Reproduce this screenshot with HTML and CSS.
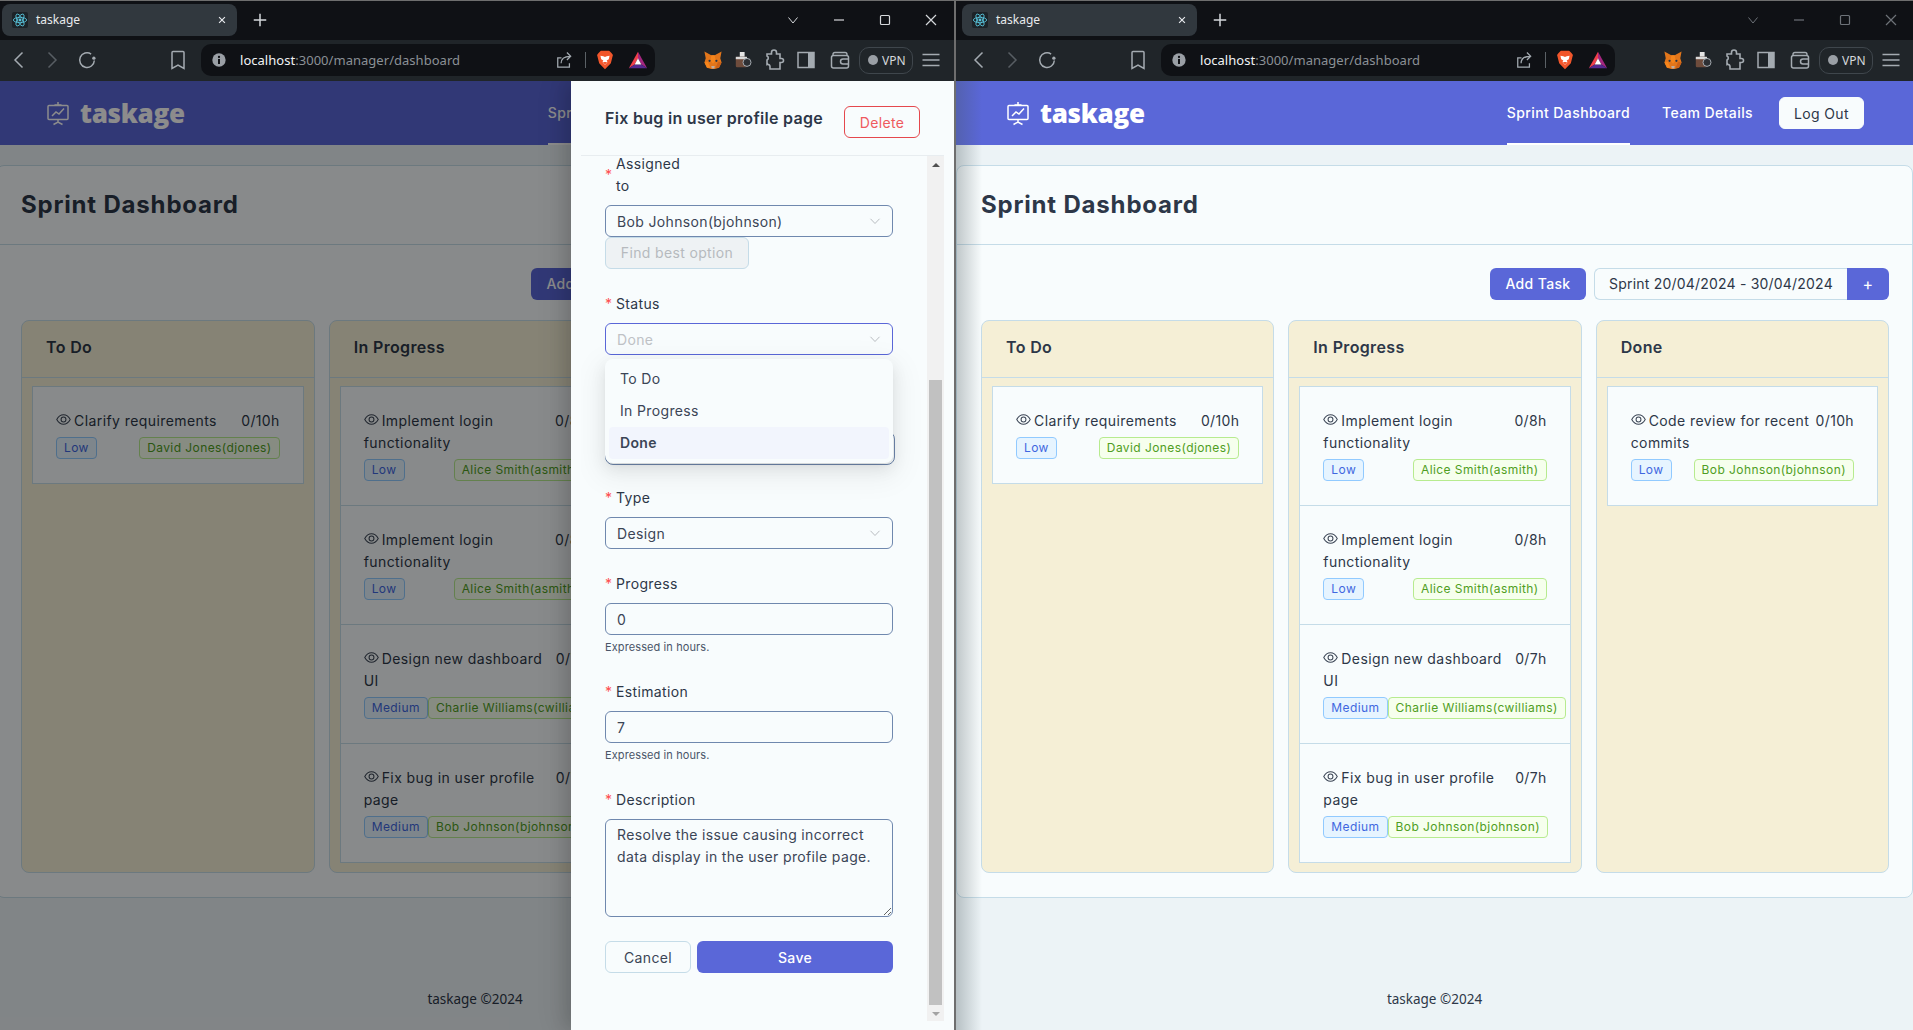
FILE: index.html
```html
<!DOCTYPE html>
<html lang="en">
<head>
<meta charset="UTF-8">
<meta name="viewport" content="width=device-width, initial-scale=1.0">
<title>taskage</title>
<link rel="stylesheet" href="styles.css">
</head>
<body>

<!-- icons used by both windows -->
<svg class="sprite" xmlns="http://www.w3.org/2000/svg">
  <symbol id="i-react" viewBox="0 0 24 24">
    <rect width="24" height="24" rx="3" fill="#1d2328"/>
    <g fill="none" stroke="#58c4dc" stroke-width="1.3">
      <ellipse cx="12" cy="12" rx="10" ry="4"/>
      <ellipse cx="12" cy="12" rx="10" ry="4" transform="rotate(60 12 12)"/>
      <ellipse cx="12" cy="12" rx="10" ry="4" transform="rotate(120 12 12)"/>
    </g>
    <circle cx="12" cy="12" r="2.2" fill="#58c4dc"/>
  </symbol>
  <symbol id="i-back" viewBox="0 0 24 24"><path d="M15.5 4.5 8 12l7.5 7.5" fill="none" stroke="currentColor" stroke-width="1.5"/></symbol>
  <symbol id="i-forward" viewBox="0 0 24 24"><path d="M8.500 4.500 16 12l-7.500 7.500" fill="none" stroke="currentColor" stroke-width="1.5"/></symbol>
  <symbol id="i-reload" viewBox="0 0 24 24">
    <path d="M16.5 5.500A8 8 0 1 0 20 12.500" fill="none" stroke="currentColor" stroke-width="1.6"/>
    <circle cx="19.5" cy="10" r="1.8" fill="currentColor"/>
  </symbol>
  <symbol id="i-bookmark" viewBox="0 0 24 24"><path d="M7 3.500h10a1 1 0 0 1 1 1V20.500l-6-3.500-6 3.500V4.500a1 1 0 0 1 1-1z" fill="none" stroke="currentColor" stroke-width="1.5"/></symbol>
  <symbol id="i-info" viewBox="0 0 24 24">
    <circle cx="12" cy="12" r="10" fill="#9a9fa5"/>
    <circle cx="12" cy="7.5" r="1.7" fill="#0f1115"/>
    <rect x="10.5" y="10.5" width="3" height="7.5" fill="#0f1115"/>
  </symbol>
  <symbol id="i-share" viewBox="0 0 24 24">
    <path d="M9 9.500H4.500v11h14V16" fill="none" stroke="currentColor" stroke-width="1.5"/>
    <path d="M8.500 16c0-5.500 4-8.500 11-8.500M15.500 3l4.500 4.500-4.500 4.500" fill="none" stroke="currentColor" stroke-width="1.5"/>
  </symbol>
  <symbol id="i-brave" viewBox="0 0 24 24">
    <path d="M7 1h10l3 3 1.500 2-1 4-1.500 6-7 7-7-7-1.500-6-1-4L4 4z" fill="#f1562b"/>
    <path d="M6.500 7l3.500.5 2 1 2-1 3.500-.5-1 4-2.500 1.500 1 2-3 3.500-3-3.500 1-2L7.500 11z" fill="#fff"/>
    <path d="M9.500 14.500h5L12 18z" fill="#f1562b"/>
  </symbol>
  <symbol id="i-bat" viewBox="0 0 24 24">
    <path d="M12 2 1 22l7-4.500 4-7.500z" fill="#f0404a"/>
    <path d="M12 2l11 20-7-4.500-4-7.500z" fill="#a3267f"/>
    <path d="M1 22h22l-7-4.500H8z" fill="#57298f"/>
    <path d="M12 10l4 7.500H8z" fill="#fff"/>
  </symbol>
  <symbol id="i-fox" viewBox="-2 -2 28 28">
    <path d="M2 2l8 4.500h4L22 2l-1.500 8 1.500 5-3 6-5 1.500h-4L5 21l-3-6 1.500-5z" fill="#e2761b"/>
    <path d="M10 6.500h4l1 6.500-3 3-3-3zM2 15l4-1 3 7-4 0z" fill="#f6851b"/>
    <path d="M22 15l-4-1-3 7 4 0z" fill="#cd6116"/>
    <path d="M10 19h4l-.5 3h-3z" fill="#c0ad9e"/>
    <circle cx="8" cy="13" r="1.3" fill="#233447"/>
    <circle cx="16" cy="13" r="1.3" fill="#233447"/>
  </symbol>
  <symbol id="i-camera" viewBox="-3 -3 30 30">
    <rect x="8" y="2" width="6" height="6" fill="#e4e4e4"/>
    <rect x="3" y="8" width="14" height="13" rx="1.5" fill="#6e4c3c"/>
    <rect x="3" y="8" width="14" height="3" fill="#d9d9d9"/>
    <circle cx="17" cy="15" r="5" fill="#2c2f33" stroke="#a9b0b6" stroke-width="1.2"/>
  </symbol>
  <symbol id="i-puzzle" viewBox="0 0 24 24"><path d="M5 6h4.500V4.500a2.500 2.500 0 0 1 5 0V6H18v4.500h1.500a2 2 0 0 1 0 4H18V21H8v-2.500a2.200 2.200 0 0 0-3-2V12a2.200 2.200 0 0 0 0-4z" fill="none" stroke="currentColor" stroke-width="1.6"/></symbol>
  <symbol id="i-sidebar" viewBox="0 0 24 24">
    <rect x="4" y="4.5" width="16" height="15" fill="none" stroke="currentColor" stroke-width="1.5"/>
    <rect x="14" y="4.5" width="6" height="15" fill="currentColor"/>
  </symbol>
  <symbol id="i-wallet" viewBox="0 0 24 24">
    <path d="M5 8V6.500A2 2 0 0 1 7 4.500h10a2 2 0 0 1 2 2V8" fill="none" stroke="currentColor" stroke-width="1.4"/>
    <rect x="3.5" y="7.5" width="17" height="12.5" rx="2" fill="none" stroke="currentColor" stroke-width="1.5"/>
    <path d="M20.500 11H15a2.500 2.500 0 0 0 0 5h5.500" fill="none" stroke="currentColor" stroke-width="1.5"/>
  </symbol>
  <symbol id="i-menu" viewBox="0 0 24 24"><path d="M3.500 6.500h17M3.500 12h17M3.500 17.500h17" fill="none" stroke="currentColor" stroke-width="1.5"/></symbol>
  <symbol id="i-close" viewBox="0 0 24 24"><path d="M7 7l10 10M17 7 7 17" fill="none" stroke="currentColor" stroke-width="2"/></symbol>
  <symbol id="i-plus" viewBox="0 0 24 24"><path d="M12 4.500v15M4.500 12h15" fill="none" stroke="currentColor" stroke-width="1.8"/></symbol>
  <symbol id="i-win-down" viewBox="0 0 24 24"><path d="M7.500 9.500 12 15l4.500-5.500" fill="none" stroke="currentColor" stroke-width="1"/></symbol>
  <symbol id="i-win-min" viewBox="0 0 24 24"><path d="M7 12h10" fill="none" stroke="currentColor" stroke-width="1.2"/></symbol>
  <symbol id="i-win-max" viewBox="0 0 24 24"><rect x="7.5" y="7.5" width="9" height="9" rx="1" fill="none" stroke="currentColor" stroke-width="1.2"/></symbol>
  <symbol id="i-win-close" viewBox="0 0 24 24"><path d="M7 7l10 10M17 7 7 17" fill="none" stroke="currentColor" stroke-width="1.2"/></symbol>
  <symbol id="i-logo" viewBox="0 0 24 24">
    <g fill="none" stroke="currentColor" stroke-width="1.5">
      <path d="M12 1v3M8.500 4h7"/>
      <rect x="2" y="4.5" width="20" height="14" rx="1"/>
      <path d="M6 15l4-4 3 2 5-5.500"/>
      <path d="M12 18.500V21M7.500 23.500l4.500-2.500 4.500 2.500"/>
    </g>
  </symbol>
  <symbol id="i-eye" viewBox="0 0 16 16">
    <path d="M.8 8C2.800 4.400 5.300 3 8 3s5.200 1.400 7.200 5c-2 3.600-4.500 5-7.200 5S2.800 11.600.8 8z" fill="none" stroke="currentColor" stroke-width="1.1"/>
    <circle cx="8" cy="8" r="2.6" fill="none" stroke="currentColor" stroke-width="1.1"/>
  </symbol>
  <symbol id="i-chevron" viewBox="0 0 12 12"><path d="M1.500 3.800 6 8.500l4.500-4.700" fill="none" stroke="currentColor" stroke-width="1"/></symbol>
</svg>

<div class="desktop">

  <!-- left window, task drawer open -->
  <div class="window window-left">
    <div class="tabstrip">
      <div class="tab">
        <svg class="tab-icon"><use href="#i-react"/></svg>
        <span class="tab-title">taskage</span>
        <svg class="tab-close"><use href="#i-close"/></svg>
      </div>
      <svg class="tab-new"><use href="#i-plus"/></svg>
      <div class="win-controls">
        <svg class="win-btn"><use href="#i-win-down"/></svg>
        <svg class="win-btn"><use href="#i-win-min"/></svg>
        <svg class="win-btn"><use href="#i-win-max"/></svg>
        <svg class="win-btn"><use href="#i-win-close"/></svg>
      </div>
    </div>
    <div class="toolbar">
      <svg class="tool tool-back"><use href="#i-back"/></svg>
      <svg class="tool tool-forward"><use href="#i-forward"/></svg>
      <svg class="tool tool-reload"><use href="#i-reload"/></svg>
      <svg class="tool tool-bookmark"><use href="#i-bookmark"/></svg>
      <div class="address">
        <svg class="addr-info"><use href="#i-info"/></svg>
        <span class="url"><b>localhost</b>:3000/manager/dashboard</span>
        <svg class="addr-icon addr-share"><use href="#i-share"/></svg>
        <span class="addr-sep"></span>
        <svg class="addr-icon addr-brave"><use href="#i-brave"/></svg>
        <svg class="addr-icon addr-bat"><use href="#i-bat"/></svg>
      </div>
      <svg class="tool tool-fox"><use href="#i-fox"/></svg>
      <svg class="tool tool-camera"><use href="#i-camera"/></svg>
      <svg class="tool tool-puzzle"><use href="#i-puzzle"/></svg>
      <svg class="tool tool-sidebar"><use href="#i-sidebar"/></svg>
      <svg class="tool tool-wallet"><use href="#i-wallet"/></svg>
      <div class="vpn"><span class="vpn-dot"></span>VPN</div>
      <svg class="tool tool-menu"><use href="#i-menu"/></svg>
    </div>

    <div class="page">
      <header class="app-header">
        <div class="logo"><svg class="logo-icon"><use href="#i-logo"/></svg><span>taskage</span></div>
        <nav class="app-nav">
          <a class="nav-link active">Sprint Dashboard</a>
          <a class="nav-link">Team Details</a>
          <button class="btn-logout">Log Out</button>
        </nav>
      </header>
      <main class="content">
        <div class="card">
          <div class="card-head"><h1>Sprint Dashboard</h1></div>
          <div class="actions">
            <button class="btn-primary">Add Task</button>
            <div class="sprint-range">Sprint 20/04/2024 - 30/04/2024</div>
            <button class="btn-add-sprint">+</button>
          </div>
          <div class="board">
            <section class="column">
              <h3 class="column-head">To Do</h3>
              <ul class="task-list">
                <li class="task">
                  <div class="task-top"><span class="task-title"><svg class="eye"><use href="#i-eye"/></svg>Clarify requirements</span><span class="task-hours">0/10h</span></div>
                  <div class="task-tags"><span class="tag tag-blue">Low</span><span class="tag tag-green">David Jones(djones)</span></div>
                </li>
              </ul>
            </section>
            <section class="column">
              <h3 class="column-head">In Progress</h3>
              <ul class="task-list">
                <li class="task">
                  <div class="task-top"><span class="task-title"><svg class="eye"><use href="#i-eye"/></svg>Implement login<br>functionality</span><span class="task-hours">0/8h</span></div>
                  <div class="task-tags"><span class="tag tag-blue">Low</span><span class="tag tag-green">Alice Smith(asmith)</span></div>
                </li>
                <li class="task">
                  <div class="task-top"><span class="task-title"><svg class="eye"><use href="#i-eye"/></svg>Implement login<br>functionality</span><span class="task-hours">0/8h</span></div>
                  <div class="task-tags"><span class="tag tag-blue">Low</span><span class="tag tag-green">Alice Smith(asmith)</span></div>
                </li>
                <li class="task">
                  <div class="task-top"><span class="task-title"><svg class="eye"><use href="#i-eye"/></svg>Design new dashboard<br>UI</span><span class="task-hours">0/7h</span></div>
                  <div class="task-tags"><span class="tag tag-blue">Medium</span><span class="tag tag-green">Charlie Williams(cwilliams)</span></div>
                </li>
                <li class="task">
                  <div class="task-top"><span class="task-title"><svg class="eye"><use href="#i-eye"/></svg>Fix bug in user profile<br>page</span><span class="task-hours">0/7h</span></div>
                  <div class="task-tags"><span class="tag tag-blue">Medium</span><span class="tag tag-green">Bob Johnson(bjohnson)</span></div>
                </li>
              </ul>
            </section>
            <section class="column">
              <h3 class="column-head">Done</h3>
              <ul class="task-list">
                <li class="task">
                  <div class="task-top"><span class="task-title"><svg class="eye"><use href="#i-eye"/></svg>Code review for recent<br>commits</span><span class="task-hours">0/10h</span></div>
                  <div class="task-tags"><span class="tag tag-blue">Low</span><span class="tag tag-green">Bob Johnson(bjohnson)</span></div>
                </li>
              </ul>
            </section>
          </div>
        </div>
      </main>
      <footer class="app-footer">taskage ©2024</footer>

      <div class="mask"></div>
      <aside class="drawer">
        <div class="drawer-head">
          <h2>Fix bug in user profile page</h2>
          <button class="btn-delete">Delete</button>
        </div>
        <div class="drawer-body">
          <form class="task-form">
            <div class="field field-assigned">
              <label class="field-label"><i>*</i><span class="label-narrow">Assigned to</span></label>
              <div class="select">Bob Johnson(bjohnson)<svg class="select-arrow"><use href="#i-chevron"/></svg></div>
              <button type="button" class="btn-find" disabled>Find best option</button>
            </div>
            <div class="field field-status">
              <label class="field-label"><i>*</i>Status</label>
              <div class="select select-open"><span class="select-muted">Done</span><svg class="select-arrow"><use href="#i-chevron"/></svg></div>
              <ul class="dropdown">
                <li>To Do</li>
                <li>In Progress</li>
                <li class="selected">Done</li>
              </ul>
            </div>
            <div class="field field-type">
              <label class="field-label"><i>*</i>Type</label>
              <div class="select">Design<svg class="select-arrow"><use href="#i-chevron"/></svg></div>
            </div>
            <div class="field field-progress">
              <label class="field-label"><i>*</i>Progress</label>
              <input class="input" type="text" value="0">
              <div class="help">Expressed in hours.</div>
            </div>
            <div class="field field-estimation">
              <label class="field-label"><i>*</i>Estimation</label>
              <input class="input" type="text" value="7">
              <div class="help">Expressed in hours.</div>
            </div>
            <div class="field field-description">
              <label class="field-label"><i>*</i>Description</label>
              <textarea class="textarea">Resolve the issue causing incorrect data display in the user profile page.</textarea>
            </div>
            <div class="form-buttons">
              <button type="button" class="btn-cancel">Cancel</button>
              <button type="button" class="btn-save">Save</button>
            </div>
          </form>
          <div class="scrollbar">
            <span class="scroll-up"></span>
            <span class="scroll-thumb"></span>
            <span class="scroll-down"></span>
          </div>
        </div>
      </aside>
    </div>
  </div>

  <!-- right window, plain dashboard -->
  <div class="window window-right">
    <div class="tabstrip">
      <div class="tab">
        <svg class="tab-icon"><use href="#i-react"/></svg>
        <span class="tab-title">taskage</span>
        <svg class="tab-close"><use href="#i-close"/></svg>
      </div>
      <svg class="tab-new"><use href="#i-plus"/></svg>
      <div class="win-controls">
        <svg class="win-btn"><use href="#i-win-down"/></svg>
        <svg class="win-btn"><use href="#i-win-min"/></svg>
        <svg class="win-btn"><use href="#i-win-max"/></svg>
        <svg class="win-btn"><use href="#i-win-close"/></svg>
      </div>
    </div>
    <div class="toolbar">
      <svg class="tool tool-back"><use href="#i-back"/></svg>
      <svg class="tool tool-forward"><use href="#i-forward"/></svg>
      <svg class="tool tool-reload"><use href="#i-reload"/></svg>
      <svg class="tool tool-bookmark"><use href="#i-bookmark"/></svg>
      <div class="address">
        <svg class="addr-info"><use href="#i-info"/></svg>
        <span class="url"><b>localhost</b>:3000/manager/dashboard</span>
        <svg class="addr-icon addr-share"><use href="#i-share"/></svg>
        <span class="addr-sep"></span>
        <svg class="addr-icon addr-brave"><use href="#i-brave"/></svg>
        <svg class="addr-icon addr-bat"><use href="#i-bat"/></svg>
      </div>
      <svg class="tool tool-fox"><use href="#i-fox"/></svg>
      <svg class="tool tool-camera"><use href="#i-camera"/></svg>
      <svg class="tool tool-puzzle"><use href="#i-puzzle"/></svg>
      <svg class="tool tool-sidebar"><use href="#i-sidebar"/></svg>
      <svg class="tool tool-wallet"><use href="#i-wallet"/></svg>
      <div class="vpn"><span class="vpn-dot"></span>VPN</div>
      <svg class="tool tool-menu"><use href="#i-menu"/></svg>
    </div>

    <div class="page">
      <header class="app-header">
        <div class="logo"><svg class="logo-icon"><use href="#i-logo"/></svg><span>taskage</span></div>
        <nav class="app-nav">
          <a class="nav-link active">Sprint Dashboard</a>
          <a class="nav-link">Team Details</a>
          <button class="btn-logout">Log Out</button>
        </nav>
      </header>
      <main class="content">
        <div class="card">
          <div class="card-head"><h1>Sprint Dashboard</h1></div>
          <div class="actions">
            <button class="btn-primary">Add Task</button>
            <div class="sprint-range">Sprint 20/04/2024 - 30/04/2024</div>
            <button class="btn-add-sprint">+</button>
          </div>
          <div class="board">
            <section class="column">
              <h3 class="column-head">To Do</h3>
              <ul class="task-list">
                <li class="task">
                  <div class="task-top"><span class="task-title"><svg class="eye"><use href="#i-eye"/></svg>Clarify requirements</span><span class="task-hours">0/10h</span></div>
                  <div class="task-tags"><span class="tag tag-blue">Low</span><span class="tag tag-green">David Jones(djones)</span></div>
                </li>
              </ul>
            </section>
            <section class="column">
              <h3 class="column-head">In Progress</h3>
              <ul class="task-list">
                <li class="task">
                  <div class="task-top"><span class="task-title"><svg class="eye"><use href="#i-eye"/></svg>Implement login<br>functionality</span><span class="task-hours">0/8h</span></div>
                  <div class="task-tags"><span class="tag tag-blue">Low</span><span class="tag tag-green">Alice Smith(asmith)</span></div>
                </li>
                <li class="task">
                  <div class="task-top"><span class="task-title"><svg class="eye"><use href="#i-eye"/></svg>Implement login<br>functionality</span><span class="task-hours">0/8h</span></div>
                  <div class="task-tags"><span class="tag tag-blue">Low</span><span class="tag tag-green">Alice Smith(asmith)</span></div>
                </li>
                <li class="task">
                  <div class="task-top"><span class="task-title"><svg class="eye"><use href="#i-eye"/></svg>Design new dashboard<br>UI</span><span class="task-hours">0/7h</span></div>
                  <div class="task-tags"><span class="tag tag-blue">Medium</span><span class="tag tag-green">Charlie Williams(cwilliams)</span></div>
                </li>
                <li class="task">
                  <div class="task-top"><span class="task-title"><svg class="eye"><use href="#i-eye"/></svg>Fix bug in user profile<br>page</span><span class="task-hours">0/7h</span></div>
                  <div class="task-tags"><span class="tag tag-blue">Medium</span><span class="tag tag-green">Bob Johnson(bjohnson)</span></div>
                </li>
              </ul>
            </section>
            <section class="column">
              <h3 class="column-head">Done</h3>
              <ul class="task-list">
                <li class="task">
                  <div class="task-top"><span class="task-title"><svg class="eye"><use href="#i-eye"/></svg>Code review for recent<br>commits</span><span class="task-hours">0/10h</span></div>
                  <div class="task-tags"><span class="tag tag-blue">Low</span><span class="tag tag-green">Bob Johnson(bjohnson)</span></div>
                </li>
              </ul>
            </section>
          </div>
        </div>
      </main>
      <footer class="app-footer">taskage ©2024</footer>
      <div class="edge-shadow"></div>
    </div>
  </div>

</div>
</body>
</html>
```

FILE: styles.css
```css
* {
  box-sizing: border-box;
}
html, body {
  height: 100%;
}
body {
  margin: 0;
  background-color: #6e6e6e;
  font-family: "Inter", "Noto Sans", sans-serif;
  font-size: 14px;
  letter-spacing: 0.35px;
  color: #2d3748;
  overflow: hidden;
}
h1, h2, h3, ul {
  margin: 0;
  padding: 0;
}
ul {
  list-style: none;
}
button {
  font-family: inherit;
  letter-spacing: inherit;
  cursor: pointer;
}
.sprite {
  position: absolute;
  width: 0;
  height: 0;
}

.desktop {
  display: flex;
  gap: 2px;
  height: 1030px;
  overflow: hidden;
}
.window {
  display: flex;
  flex-direction: column;
  flex: none;
  height: 1030px;
  overflow: hidden;
}
.window-left {
  width: 958px;
  margin-left: -4px;
}
.window-right {
  width: 957px;
}
.window-right .win-controls {
  color: #6d7278;
}

/* browser chrome */
.tabstrip {
  display: flex;
  align-items: center;
  height: 40px;
  padding-left: 6px;
  padding-bottom: 1px;
  background-color: #0f1115;
  border-top: 1px solid #6e6e6e;
  font-family: "Noto Sans", sans-serif;
  letter-spacing: 0;
}
.tab {
  display: flex;
  align-items: center;
  width: 235px;
  height: 32px;
  padding-left: 10px;
  background-color: #31383e;
  border-radius: 8px;
  color: #e8eaed;
}
.tab-icon {
  width: 16px;
  height: 16px;
}
.tab-title {
  margin-left: 8px;
  margin-top: -1px;
  font-size: 12px;
}
.tab-close {
  width: 14px;
  height: 14px;
  margin-left: auto;
  margin-right: 8px;
  color: #e8eaed;
}
.tab-new {
  width: 20px;
  height: 20px;
  margin-left: 13px;
  color: #d5d8db;
}
.win-controls {
  display: flex;
  gap: 22px;
  margin-left: 511px;
  color: #d5d8db;
}
.win-btn {
  width: 24px;
  height: 24px;
}
.toolbar {
  display: flex;
  align-items: center;
  height: 41px;
  padding-left: 11px;
  padding-bottom: 1px;
  background-color: #202529;
  color: #a4abb1;
  font-family: "Noto Sans", sans-serif;
  letter-spacing: 0;
}
.tool {
  flex: none;
  width: 24px;
  height: 24px;
}
.tool-back {
  width: 24px;
}
.tool-forward {
  margin-left: 9px;
  color: #585e63;
}
.tool-reload {
  width: 22px;
  height: 22px;
  margin-left: 12px;
}
.tool-bookmark {
  margin-left: 68px;
}
.address {
  display: flex;
  align-items: center;
  flex: none;
  width: 454px;
  height: 32px;
  margin-left: 11px;
  margin-right: 46px;
  padding-left: 10px;
  background-color: #0f1115;
  border-radius: 10px;
}
.addr-info {
  width: 16px;
  height: 16px;
}
.url {
  margin-left: 13px;
  font-size: 13px;
  letter-spacing: 0.03px;
  color: #8b9095;
}
.url b {
  font-weight: 400;
  color: #f1f3f4;
}
.addr-icon {
  flex: none;
  width: 20px;
  height: 20px;
}
.addr-share {
  margin-left: auto;
}
.addr-sep {
  width: 1px;
  height: 16px;
  margin: 0 9px 0 11px;
  background-color: #5b6166;
}
.addr-bat {
  margin: 0 7px 0 13px;
}
.tool-camera {
  margin-left: 6px;
}
.tool-puzzle {
  margin-left: 7px;
}
.tool-sidebar {
  margin-left: 8px;
}
.tool-wallet {
  margin-left: 10px;
}
.vpn {
  display: flex;
  align-items: center;
  gap: 4px;
  flex: none;
  width: 54px;
  height: 27px;
  margin-left: 7px;
  padding-left: 8px;
  border: 1px solid #3f464c;
  border-radius: 10px;
  font-size: 12px;
  color: #d5d8db;
}
.vpn-dot {
  width: 10px;
  height: 10px;
  background-color: #9a9fa5;
  border-radius: 50%;
}
.tool-menu {
  margin-left: 6px;
}

/* app */
.page {
  position: relative;
  flex: 1;
  background-color: #ecf3f6;
  overflow: hidden;
}
.app-header {
  display: flex;
  align-items: stretch;
  justify-content: space-between;
  height: 64px;
  padding: 0 49px 0 50px;
  background-color: #5a67d8;
  color: #fff;
}
.logo {
  display: flex;
  align-items: center;
  gap: 10px;
  padding-bottom: 1px;
  font-family: "Open Sans", sans-serif;
  font-size: 26px;
  font-weight: 800;
  letter-spacing: -0.3px;
}
.logo-icon {
  width: 24px;
  height: 26px;
  margin-top: 1px;
}
.app-nav {
  display: flex;
  align-items: stretch;
}
.nav-link {
  display: flex;
  align-items: center;
  margin-right: 32px;
  padding-top: 1px;
  border-bottom: 2px solid transparent;
  font-weight: 500;
  letter-spacing: 0.4px;
}
.nav-link.active {
  border-bottom-color: #fff;
}
.nav-link:nth-child(2) {
  margin-right: 26px;
}
.btn-logout {
  align-self: center;
  width: 85px;
  height: 32px;
  padding: 0;
  background-color: #f8fcfd;
  border: 1px solid #f8fcfd;
  border-radius: 6px;
  color: #2d3748;
  font-size: 14px;
}

.content {
  padding-top: 20px;
}
.card {
  height: 733px;
  padding-bottom: 24px;
  background-color: #f8fcfd;
  border: 1px solid #c5dce8;
  border-radius: 8px;
}
.card-head {
  display: flex;
  align-items: center;
  height: 79px;
  padding-left: 24px;
  border-bottom: 1px solid #c5dce8;
}
.card-head h1 {
  font-size: 24px;
  font-weight: 700;
  letter-spacing: 0.82px;
  line-height: 34px;
}
.actions {
  display: flex;
  justify-content: flex-end;
  height: 32px;
  margin: 23px 23px 20px 0;
}
.btn-primary {
  width: 96px;
  height: 32px;
  margin-right: 8px;
  padding: 0 0 2px;
  background-color: #5a67d8;
  border: none;
  border-radius: 6px;
  color: #fff;
  font-size: 14px;
  font-weight: 500;
}
.sprint-range {
  display: flex;
  align-items: center;
  justify-content: center;
  width: 253px;
  height: 32px;
  padding-bottom: 2px;
  border: 1px solid #c5dce8;
  border-right: none;
  border-radius: 6px 0 0 6px;
  letter-spacing: 0.2px;
}
.btn-add-sprint {
  width: 42px;
  height: 32px;
  padding: 0;
  background-color: #5a67d8;
  border: none;
  border-radius: 0 6px 6px 0;
  color: #fff;
  font-size: 16px;
}

.board {
  display: grid;
  grid-template-columns: repeat(3, 1fr);
  gap: 14px;
  height: 553px;
  margin: 0 23px 0 24px;
}
.column {
  background-color: #f5efd6;
  border: 1px solid #c5dce8;
  border-radius: 8px;
  padding-bottom: 9px;
}
.column-head {
  height: 57px;
  padding-left: 24px;
  border-bottom: 1px solid #c5dce8;
  font-size: 16px;
  font-weight: 600;
  line-height: 53px;
  margin: 0 0 8px;
}
.task-list {
  margin: 0 10px;
  background-color: #f8fcfd;
  border: 1px solid #c5dce8;
}
.task {
  padding: 23px 23px 23px;
  border-bottom: 1px solid #c5dce8;
}
.task:last-child {
  border-bottom: none;
}
.task-top {
  display: flex;
  justify-content: space-between;
  line-height: 22px;
}
.task-title {
  flex: 1;
  white-space: nowrap;
  letter-spacing: 0.42px;
}
.eye {
  width: 15px;
  height: 15px;
  margin-right: 3px;
  color: #3c4656;
  vertical-align: -1px;
}
.task-hours {
  flex: none;
}
.task-tags {
  display: flex;
  justify-content: space-between;
  margin-top: 5px;
  margin-bottom: 1px;
}
.tag {
  flex: none;
  height: 22px;
  padding: 0 7px;
  border: 1px solid;
  border-radius: 4px;
  font-size: 12px;
  letter-spacing: 0.42px;
  line-height: 20px;
}
.tag-blue {
  background-color: #e6f4ff;
  border-color: #91caff;
  color: #3f67e0;
}
.tag-green {
  background-color: #f6ffed;
  border-color: #b7eb8f;
  color: #4f9e22;
}
.app-footer {
  margin-top: 90px;
  font-family: "Noto Sans", sans-serif;
  font-size: 13.5px;
  letter-spacing: 0;
  line-height: 22px;
  text-align: center;
}

/* overlays */
.mask {
  position: absolute;
  inset: 0;
  background-color: rgba(0, 0, 0, 0.45);
}
.edge-shadow {
  position: absolute;
  top: 0;
  bottom: 0;
  left: 0;
  width: 26px;
  background: linear-gradient(to right, rgba(70, 85, 90, 0.32), rgba(70, 85, 90, 0));
}
.drawer {
  position: absolute;
  top: 0;
  right: 0;
  bottom: 0;
  width: 383px;
  padding: 0 10px 0 10px;
  background-color: #f8fcfd;
  box-shadow: -6px 0 16px rgba(0, 0, 0, 0.12), -9px 0 28px rgba(0, 0, 0, 0.08);
}
.drawer-head {
  display: flex;
  justify-content: space-between;
  align-items: flex-start;
  height: 75px;
  padding: 25px 24px 0;
  border-bottom: 1px solid #e8edf0;
}
.drawer-head h2 {
  font-size: 16px;
  font-weight: 600;
  letter-spacing: 0.3px;
  line-height: 24px;
}
.btn-delete {
  width: 76px;
  height: 32px;
  padding: 0;
  background: none;
  border: 1px solid #e5484d;
  border-radius: 6px;
  color: #ef5a5d;
  font-size: 14px;
}
.drawer-body {
  position: relative;
  height: 865px;
  overflow: hidden;
}
.task-form {
  width: 312px;
  margin-top: -3px;
  padding-left: 24px;
}
.field {
  position: relative;
}
.field-assigned { margin-bottom: 24px; }
.field-status { margin-bottom: 132px; } /* dropdown opens over this gap */
.field-type { margin-bottom: 24px; }
.field-progress { margin-bottom: 23px; }
.field-estimation { margin-bottom: 23px; }
.field-description { margin-bottom: 24px; }
.field-label {
  display: flex;
  align-items: center;
  margin-bottom: 8px;
  line-height: 22px;
}
.field-label i {
  width: 11px;
  color: #ff4d4f;
  font-style: normal;
}
.label-narrow {
  width: 66px;
}
.select, .input, .textarea {
  display: block;
  width: 288px;
  background-color: transparent;
  border: 1px solid #6f88ae;
  border-radius: 6px;
  color: #3b4556;
  font-family: inherit;
  font-size: 14px;
  letter-spacing: inherit;
}
.select {
  display: flex;
  align-items: center;
  justify-content: space-between;
  height: 32px;
  padding: 0 11px;
}
.select-open {
  border-color: #5a67d8;
}
.select-muted {
  color: #bfc2c6;
}
.select-arrow {
  width: 12px;
  height: 12px;
  color: #b9bdc1;
}
.input {
  height: 32px;
  padding: 0 11px;
  outline: none;
}
.textarea {
  height: 98px;
  padding: 4px 11px;
  line-height: 22px;
  outline: none;
  resize: vertical;
}
.help {
  margin-top: 1px;
  font-size: 11px;
  line-height: 22px;
  color: #4a5568;
  letter-spacing: 0.1px;
}
.btn-find {
  display: block;
  width: 144px;
  height: 32px;
  padding: 0 0 1px;
  background-color: #eef2f4;
  border: 1px solid #c5dce8;
  border-radius: 6px;
  color: #b6babe;
  font-size: 14px;
  cursor: not-allowed;
}
/* next select sits behind the open list, only its corners show */
.field-status::after {
  content: "";
  position: absolute;
  top: 138px;
  left: 0;
  width: 288px;
  height: 32px;
  border: 1px solid #6f88ae;
  border-radius: 8px;
}
.dropdown {
  position: absolute;
  z-index: 1;
  top: 66px;
  left: 0;
  width: 288px;
  height: 104px;
  padding: 4px;
  background-color: #f8fcfd;
  border-radius: 8px;
  box-shadow: 0 6px 16px rgba(0, 0, 0, 0.08), 0 3px 6px -4px rgba(0, 0, 0, 0.12), 0 9px 28px 8px rgba(0, 0, 0, 0.05);
}
.dropdown li {
  height: 32px;
  padding: 0 12px 0 11px;
  border-radius: 4px;
  line-height: 32px;
  color: #3b4556;
}
.dropdown li.selected {
  background-color: #f2f5fd;
  font-weight: 600;
}
.form-buttons {
  display: flex;
  gap: 6px;
  width: 288px;
}
.btn-cancel {
  width: 86px;
  height: 32px;
  padding: 0;
  background: none;
  border: 1px solid #c5dce8;
  border-radius: 6px;
  color: #3b4556;
  font-size: 14px;
}
.btn-save {
  flex: 1;
  height: 32px;
  padding: 0;
  background-color: #5a67d8;
  border: none;
  border-radius: 6px;
  color: #fff;
  font-size: 14px;
  font-weight: 500;
}

/* fake scrollbar, the form is drawn scrolled */
.scrollbar {
  position: absolute;
  top: 0;
  right: 0;
  width: 17px;
  height: 865px;
  background-color: #f1f1f1;
}
.scroll-thumb {
  position: absolute;
  top: 224px;
  left: 2px;
  width: 13px;
  height: 625px;
  background-color: #c1c1c1;
}
.scroll-up, .scroll-down {
  position: absolute;
  left: 5px;
  width: 0;
  height: 0;
  border-left: 4px solid transparent;
  border-right: 4px solid transparent;
}
.scroll-up {
  top: 7px;
  border-bottom: 4px solid #505050;
}
.scroll-down {
  bottom: 5px;
  border-top: 4px solid #a3a3a3;
}
```
